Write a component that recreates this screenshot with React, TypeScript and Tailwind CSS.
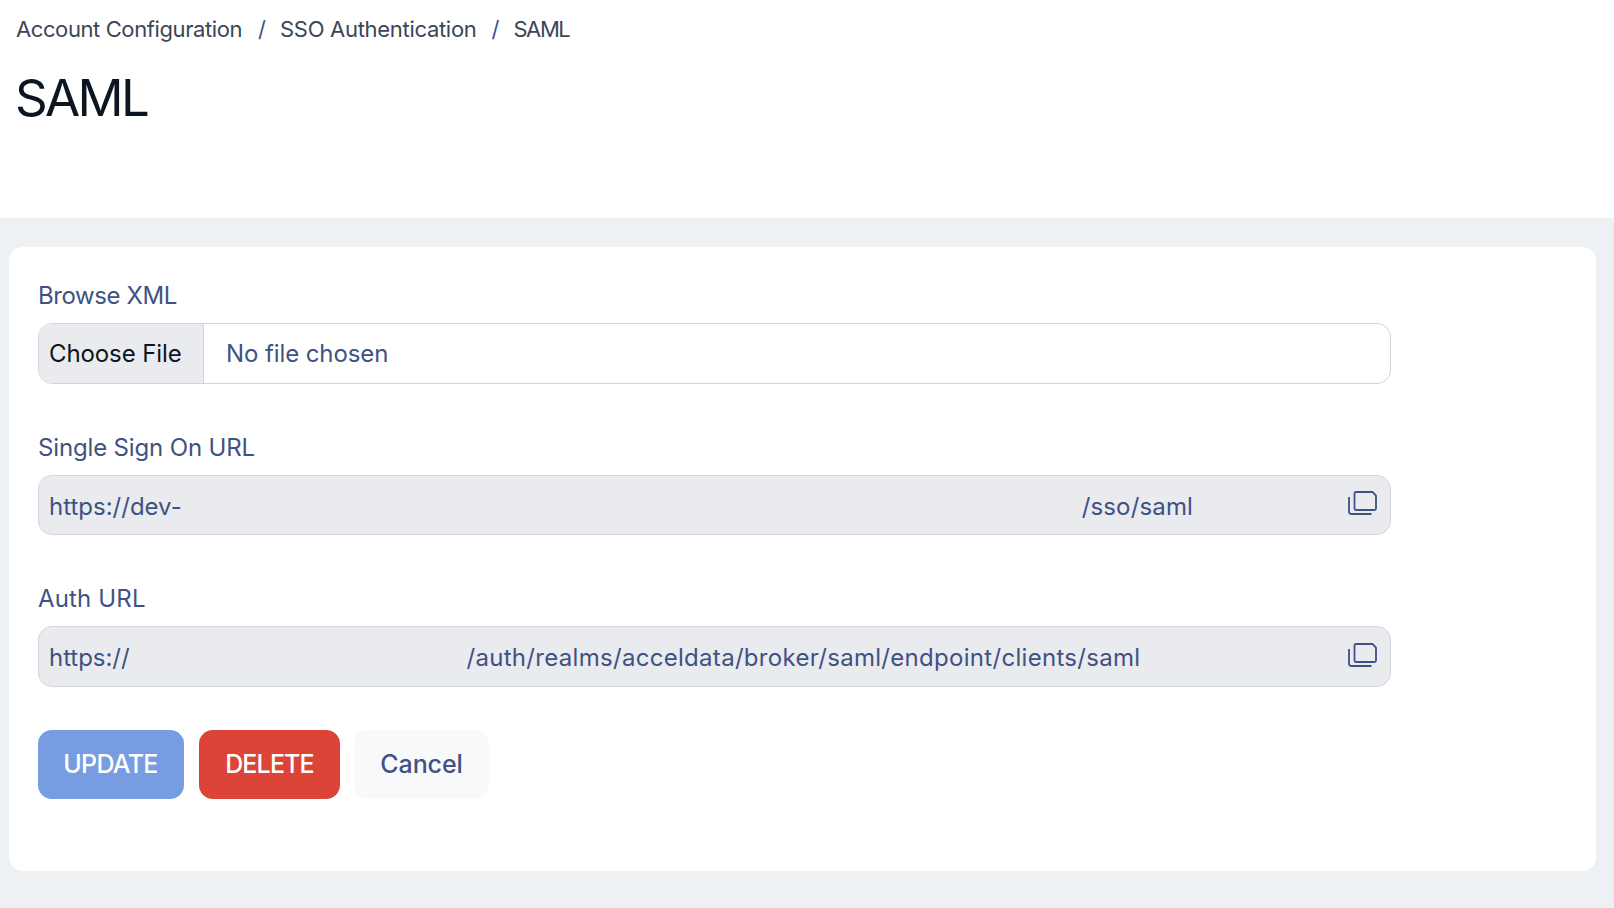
import React from 'react';

function CopyIcon() {
  return (
    <svg width="29" height="24" viewBox="0 0 29 24" fill="none" stroke="#3f5282" strokeWidth="1.8" className="shrink-0 -mt-[4px]">
      <path d="M6.5 2.5C6.5 1.6 7.1 1 8 1H24.5L28 4.5V17.5C28 18.4 27.4 19 26.5 19H8C7.1 19 6.5 18.4 6.5 17.5Z" />
      <path d="M1 6V20.5C1 21.9 2 23 3.5 23H23.5" />
    </svg>
  );
}

function Label({ className, children }: { className: string; children: React.ReactNode }) {
  return <div className={`h-[32px] mb-[11px] text-[24px] leading-[31px] text-[#3f5282] ${className}`}>{children}</div>;
}

export default function App() {
  return (
    <div className="min-h-screen bg-[#eef1f4] font-['Inter',sans-serif]">
      <div className="h-[218px] bg-white px-4 pt-[15px]">
        <div className="flex items-center h-[29px] text-[22px] text-[#3b4658]">
          <span className="tracking-[-0.4px]">Account Configuration</span>
          <span className="ml-[16px] mr-[14px] text-[#3f5282]">/</span>
          <span className="tracking-[-0.3px]">SSO Authentication</span>
          <span className="ml-[15px] mr-[14px] text-[#3f5282]">/</span>
          <span className="tracking-[-1.4px]">SAML</span>
        </div>
        <h1 className="mt-[22px] -ml-[1px] text-[51px] leading-[64px] tracking-[-2.7px] text-[#0b1620]">SAML</h1>
      </div>

      <div className="mx-[9px] mt-[29px] h-[624px] w-[1587px] rounded-[14px] bg-white pl-[29px] pt-[33px]">
        <div className="w-[1353px]">
          <div className="mb-[48px]">
            <Label className="tracking-[-0.4px]">Browse XML</Label>
            <div className="flex h-[61px] rounded-[14px] border border-[#d2d5dc] bg-white overflow-hidden text-[24px] tracking-[-0.1px]">
              <div className="flex items-center w-[165px] pl-[10px] pt-[1px] bg-[#e9ebef] border-r border-[#d2d5dc] text-[#0b1620]">Choose File</div>
              <div className="flex items-center pl-[22px] pt-[1px] text-[#3f5282]">No file chosen</div>
            </div>
          </div>

          <div className="mb-[48px]">
            <Label className="tracking-[-0.15px]">Single Sign On URL</Label>
            <div className="flex items-center justify-between h-[60px] pl-[10px] pr-[13px] rounded-[14px] border border-[#d2d5dc] bg-[#e9ebef] text-[24px] text-[#3f5282]">
              <div className="whitespace-nowrap pt-[3px]">
                <span className="tracking-[0px]">https://dev-</span>
                <span className="ml-[900px] tracking-[0.15px]">/sso/saml</span>
              </div>
              <CopyIcon />
            </div>
          </div>

          <div className="mb-[48px]">
            <Label className="tracking-[0.15px]">Auth URL</Label>
            <div className="flex items-center justify-between h-[61px] pl-[10px] pr-[13px] rounded-[14px] border border-[#d2d5dc] bg-[#e9ebef] text-[24px] text-[#3f5282]">
              <div className="whitespace-nowrap pt-[2px]">
                <span className="tracking-[-0.05px]">https://</span>
                <span className="ml-[337px] tracking-[0.3px]">/auth/realms/acceldata/broker/saml/endpoint/clients/saml</span>
              </div>
              <CopyIcon />
            </div>
          </div>

          <div className="flex -mt-[5px]">
            <button className="h-[69px] w-[146px] pr-[1px] rounded-[14px] bg-[#779ce1] text-[25px] font-medium tracking-[-0.7px] text-white">UPDATE</button>
            <button className="ml-[15px] h-[69px] w-[141px] rounded-[14px] bg-[#db4437] text-[25px] font-medium tracking-[-0.85px] text-white">DELETE</button>
            <button className="ml-[14px] h-[69px] w-[135px] rounded-[14px] bg-[#f8f9fb] text-[25px] font-medium tracking-[-0.1px] text-[#3f5282]">Cancel</button>
          </div>
        </div>
      </div>
    </div>
  );
}
